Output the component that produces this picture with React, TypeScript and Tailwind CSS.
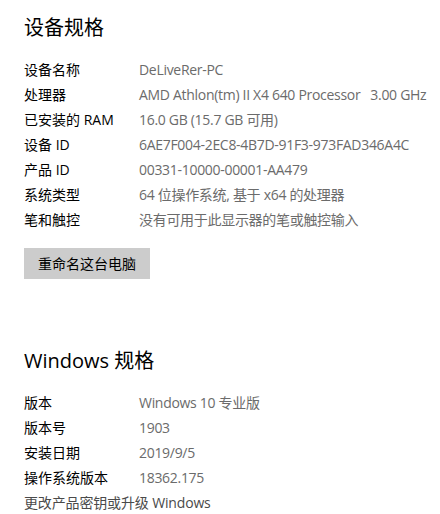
import React from "react";

const font = { fontFamily: '"Open Sans", "Noto Sans CJK SC", sans-serif' };

type Row = [string, string];

const device: Row[] = [
  ["设备名称", "DeLiveRer-PC"],
  ["处理器", "AMD Athlon(tm) II X4 640 Processor   3.00 GHz"],
  ["已安装的 RAM", "16.0 GB (15.7 GB 可用)"],
  ["设备 ID", "6AE7F004-2EC8-4B7D-91F3-973FAD346A4C"],
  ["产品 ID", "00331-10000-00001-AA479"],
  ["系统类型", "64 位操作系统, 基于 x64 的处理器"],
  ["笔和触控", "没有可用于此显示器的笔或触控输入"],
];

const win: Row[] = [
  ["版本", "Windows 10 专业版"],
  ["版本号", "1903"],
  ["安装日期", "2019/9/5"],
  ["操作系统版本", "18362.175"],
];

function Rows({ rows }: { rows: Row[] }) {
  return (
    <div className="flex flex-col">
      {rows.map(([k, v]) => (
        <div key={k} className="flex h-[25px] items-center text-[14px]">
          <div className="w-[115px] shrink-0 text-black">{k}</div>
          <div className="whitespace-pre tracking-[-0.3px] text-[#6b6b6b]">{v}</div>
        </div>
      ))}
    </div>
  );
}

export default function App() {
  return (
    <div className="w-[440px] h-[514px] overflow-hidden bg-white pl-6" style={font}>
      <div className="mt-[14px] h-[28px] text-[20px] leading-[28px] text-black">设备规格</div>
      <div className="mt-[15px]">
        <Rows rows={device} />
      </div>
      <div className="mt-[16px] flex h-[31px] w-[126px] items-center justify-center bg-[#cccccc] text-[14px] text-black">
        重命名这台电脑
      </div>
      <div className="mt-[68px] h-[28px] text-[20px] leading-[28px] text-black">Windows 规格</div>
      <div className="mt-[15px]">
        <Rows rows={win} />
        <div className="flex h-[25px] items-center text-[14px] tracking-[-0.15px] text-[#4a4a4a]">
          更改产品密钥或升级 Windows
        </div>
      </div>
    </div>
  );
}
